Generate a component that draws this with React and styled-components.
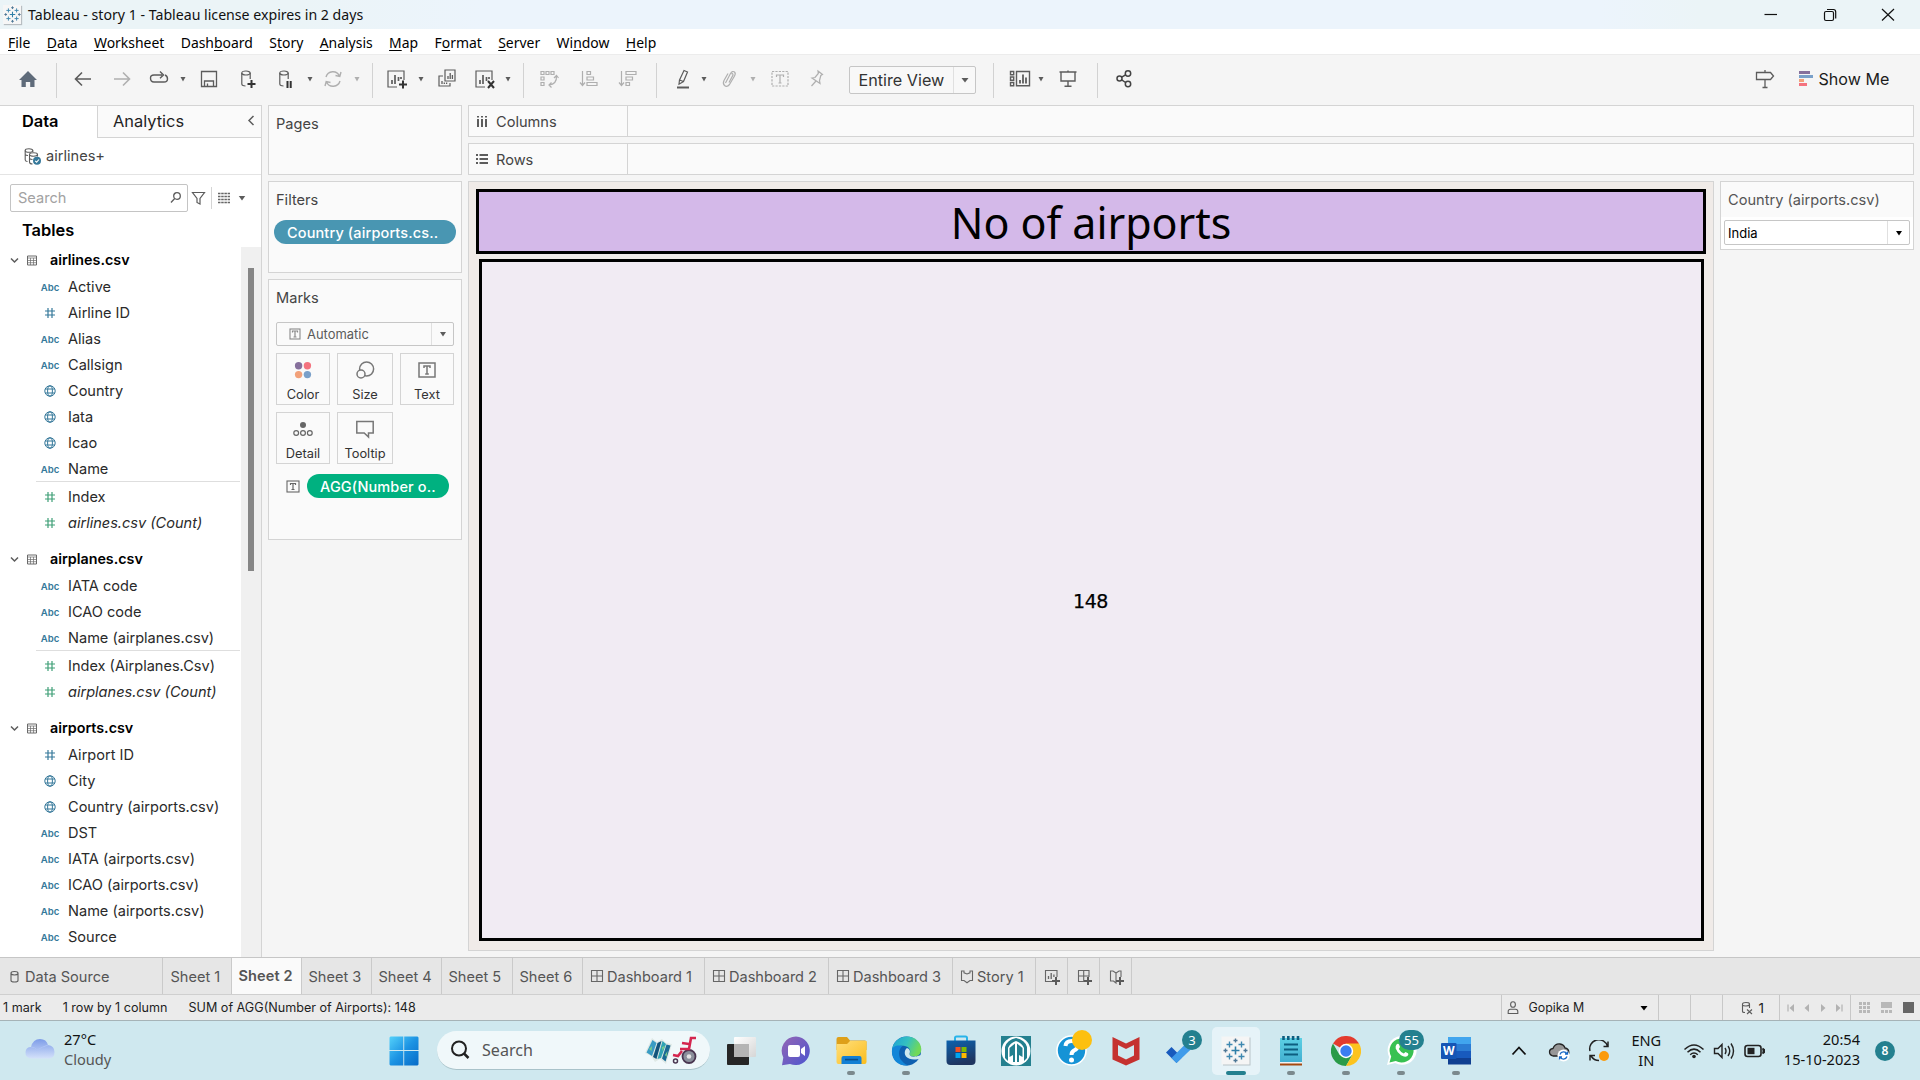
import React from "react";
import styled, { createGlobalStyle, css } from "styled-components";

const LINE = "#d4d4d4";
const UI = `Inter, "Open Sans", sans-serif`;
const WIN = `"Noto Sans", "Open Sans", sans-serif`;

const Global = createGlobalStyle`
  * { box-sizing: border-box; }
  body { margin: 0; background: #f5f5f5; overflow: hidden; }
  svg { display: block; flex: none; }
`;

const Screen = styled.div`
  width: 1920px;
  height: 1080px;
  display: flex;
  flex-direction: column;
  background: #f5f5f5;
  font: 400 14.5px ${UI};
  color: #333;
  white-space: nowrap;
`;

/* ---------- window chrome ---------- */
const TitleBar = styled.header`
  height: 29px;
  display: flex;
  align-items: center;
  padding: 0 22px 0 3px;
  background: linear-gradient(90deg, #ebf4f7 0, #ebf4f7 300px, #ecf4fc 480px, #ecf4fc 1600px, #ebf4f7 1700px);
  font: 400 14.15px ${WIN};
  color: #111;
`;
const AppIcon = styled.div`
  width: 18px;
  height: 19px;
  margin-right: 7px;
  display: flex;
  align-items: center;
  justify-content: center;
  background: #f6f6f6;
  box-shadow: 1px 1px 1px #b8bec2;
`;
const WindowButtons = styled.div`
  margin-left: auto;
  display: flex;
  gap: 38.5px;
`;
const MenuBar = styled.nav`
  height: 25px;
  display: flex;
  align-items: center;
  gap: 16.4px;
  padding: 2px 8px 0;
  background: #fff;
  font: 400 13.95px ${WIN};
  color: #000;
`;
const MenuItem = styled.span`
  u { text-underline-offset: 2px; }
`;
const Toolbar = styled.div`
  height: 51px;
  display: flex;
  align-items: center;
  padding-bottom: 2px;
  border-top: 1px solid #ececec;
`;
const Tool = styled.div`
  flex: none;
  width: ${(p) => p.$w || 24}px;
  height: 24px;
  margin-left: ${(p) => p.$gap || 0}px;
  display: flex;
  align-items: center;
  justify-content: center;
  opacity: ${(p) => (p.$off ? 0.45 : 1)};
`;
const Divider = styled.i`
  flex: none;
  width: 1px;
  height: 35px;
  margin: 3px 0 0 ${(p) => p.$gap}px;
  background: #d2d2d2;
`;
const Combo = styled.div`
  flex: none;
  display: flex;
  align-items: stretch;
  width: ${(p) => p.$w}px;
  height: ${(p) => p.$h}px;
  margin: ${(p) => p.$m || "0"};
  border: 1px solid #c6c6c6;
  border-radius: 2px;
  background: ${(p) => p.$bg || "#fafafa"};
`;
const ComboText = styled.span`
  flex: 1;
  display: flex;
  align-items: center;
  gap: ${(p) => p.$gap || 0}px;
  padding-left: ${(p) => p.$pl}px;
  font-size: ${(p) => p.$size}px;
  color: ${(p) => p.$color || "#333"};
`;
const ComboArrow = styled.span`
  width: 22px;
  display: flex;
  align-items: center;
  justify-content: center;
  border-left: 1px solid #e0e0e0;
`;
const ShowMe = styled.div`
  margin-left: 22px;
  display: flex;
  align-items: center;
  gap: 6px;
  font-size: 16.1px;
  color: #1c1c1c;
`;

/* ---------- workspace ---------- */
const Workspace = styled.main`
  height: 852px;
  display: flex;
`;
const DataPane = styled.aside`
  width: 262px;
  display: flex;
  flex-direction: column;
  background: #fff;
  border-top: 1px solid ${LINE};
  border-right: 1px solid ${LINE};
`;
const PaneTabs = styled.div`
  height: 32px;
  display: flex;
  font-size: 16.4px;
  color: #1f1f1f;
`;
const ActiveTab = styled.div`
  width: 97px;
  padding: 5px 0 0 22px;
  font-weight: 600;
  font-size: 16.4px;
  color: #000;
`;
const IdleTab = styled.div`
  flex: 1;
  display: flex;
  align-items: center;
  justify-content: space-between;
  padding: 0 6px 1px 15px;
  background: #fafafa;
  border-left: 1px solid ${LINE};
  border-bottom: 1px solid ${LINE};
`;
const SourceRow = styled.div`
  height: 37px;
  display: flex;
  align-items: center;
  gap: 5px;
  padding-left: 24px;
  border-bottom: 1px solid #e4e4e4;
  font-size: 14.6px;
  color: #444;
`;
const SearchRow = styled.div`
  display: flex;
  align-items: center;
  margin-top: 9px;
  height: 28px;
  padding-left: 10px;
`;
const SearchBox = styled.div`
  width: 178px;
  height: 28px;
  display: flex;
  align-items: center;
  justify-content: space-between;
  padding: 0 5px 1px 7px;
  border: 1px solid #c4c4c4;
  border-radius: 2px;
  font-size: 14.6px;
  color: #a2a2a2;
`;
const TinyRule = styled.i`
  width: 1px;
  height: 22px;
  margin: 0 5px 0 3px;
  background: ${LINE};
`;
const TablesTitle = styled.h2`
  margin: 0;
  height: 35px;
  padding-left: 22px;
  line-height: 37px;
  font-size: 16.4px;
  font-weight: 600;
  color: #000;
`;
const TreeArea = styled.div`
  flex: 1;
  display: flex;
`;
const Tree = styled.div`
  width: 241px;
`;
const ScrollTrack = styled.div`
  width: 20px;
  padding: 21px 0 0 7px;
  background: #f0f0f0;
`;
const ScrollThumb = styled.div`
  width: 6px;
  height: 303px;
  background: #868686;
`;
const TableHead = styled.div`
  height: 27px;
  display: flex;
  align-items: center;
  margin-top: ${(p) => (p.$first ? 0 : 10)}px;
  padding: 0 0 2px 10px;
  font-size: 14.3px;
  font-weight: 600;
  color: #000;
  span { margin-left: 12px; }
`;
const Field = styled.div`
  height: 26px;
  display: flex;
  align-items: center;
  color: #2a2a2a;
  font-size: 14.55px;
  font-style: ${(p) => (p.$italic ? "italic" : "normal")};
`;
const FieldIcon = styled.span`
  width: 32px;
  margin: 0 2px 0 34px;
  display: flex;
  justify-content: center;
  font-size: 9.6px;
  font-weight: 600;
  font-style: normal;
  color: #35789a;
`;
const FieldRule = styled.div`
  height: 2px;
  margin: -1px 1px 1px 36px;
  border-top: 1px solid #dedede;
`;

const Shelves = styled.section`
  width: 194px;
  margin-left: 6px;
  display: flex;
  flex-direction: column;
  gap: 6px;
`;
const Card = styled.div`
  height: ${(p) => p.$h}px;
  padding: 0 7px;
  border: 1px solid ${LINE};
  background: #fafafa;
`;
const CardTitle = styled.div`
  height: 36px;
  display: flex;
  align-items: center;
  font-size: 14.6px;
  color: #444;
`;
const FilterPills = styled.div`
  margin: 2px -2px 0;
`;
const Pill = styled.div`
  width: ${(p) => p.$w}px;
  height: 24px;
  padding-left: 13px;
  line-height: 25px;
  border-radius: 12px;
  background: ${(p) => p.$bg};
  color: #fff;
  font-size: 14.5px;
  font-weight: 500;
  letter-spacing: 0.13px;
`;
const MarkGrid = styled.div`
  margin-top: 7px;
  display: grid;
  grid-template-columns: 54px 56px 54px;
  gap: 7px;
`;
const MarkButton = styled.div`
  height: 52px;
  display: flex;
  flex-direction: column;
  align-items: center;
  justify-content: space-between;
  padding: 5px 0 1px;
  border: 1px solid ${LINE};
  font-size: 12.8px;
  line-height: 16px;
  color: #333;
`;
const MarkPillRow = styled.div`
  display: flex;
  align-items: center;
  gap: 7px;
  margin: 10px 0 0 10px;
`;

const Canvas = styled.section`
  width: 1446px;
  margin-left: 6px;
  display: flex;
  flex-direction: column;
  gap: 6px;
`;
const Shelf = styled.div`
  height: 32px;
  display: flex;
  border: 1px solid ${LINE};
  background: #fafafa;
`;
const ShelfLabel = styled.div`
  width: 159px;
  display: flex;
  align-items: center;
  gap: 8px;
  padding: 1px 0 0 7px;
  border-right: 1px solid ${LINE};
  font-size: 14.6px;
  color: #444;
`;
const ViewRow = styled.div`
  display: flex;
  gap: 6px;
  align-items: flex-start;
`;
const View = styled.div`
  width: 1246px;
  height: 770px;
  display: flex;
  flex-direction: column;
  gap: 5px;
  padding: 7px 7px 9px;
  border: 1px solid ${LINE};
  background: #f0ebe8;
  color: #000;
`;
const ViewTitle = styled.h1`
  margin: 0;
  height: 65px;
  display: flex;
  align-items: center;
  justify-content: center;
  border: 3px solid #000;
  background: #d4b9e9;
  font: 400 43px/1 ${WIN};
  letter-spacing: -0.05px;
  padding-top: 1px;
`;
const ViewBody = styled.div`
  flex: 1;
  margin: 0 2px 0 3px;
  display: flex;
  align-items: center;
  justify-content: center;
  padding: 1px 2px 0 0;
  border: 3px solid #000;
  background: #f1ebf3;
  font: 400 19px "DejaVu Sans", sans-serif;
  letter-spacing: -0.4px;
  -webkit-text-stroke: 0.25px #000;
`;
const FilterCard = styled.div`
  width: 194px;
  height: 69px;
  padding: 0 3px;
  border: 1px solid ${LINE};
  background: linear-gradient(#fafafa 35px, #fff 35px);
`;
const FilterTitle = styled.div`
  height: 35px;
  padding: 0 4px;
  line-height: 36px;
  font-size: 14.6px;
  color: #555;
`;

/* ---------- sheet tabs and status ---------- */
const SheetTabs = styled.div`
  height: 37px;
  display: flex;
  border-top: 1px solid #c6c6c6;
  background: #e6e6e6;
`;
const SheetTab = styled.div`
  width: ${(p) => p.$w}px;
  display: flex;
  align-items: center;
  gap: ${(p) => p.$gap || 5}px;
  padding: 1px 0 0 ${(p) => p.$pl}px;
  border-right: 1px solid #cacaca;
  font-size: 14.55px;
  color: #555;
  ${(p) => p.$active && css`
    background: #fafafa;
    font-weight: 600;
    letter-spacing: 0.1px;
    padding-bottom: 2px;
  `}
`;
const StatusBar = styled.div`
  height: 27px;
  display: flex;
  border-top: 1px solid #cfcfcf;
  border-bottom: 1px solid #a6b3b7;
  background: #ebebeb;
  font-size: 12.6px;
  color: #1e1e1e;
`;
const StatusText = styled.div`
  flex: 1;
  display: flex;
  align-items: center;
  gap: 21px;
  padding-left: 3px;
`;
const StatusCell = styled.div`
  width: ${(p) => p.$w}px;
  display: flex;
  align-items: center;
  justify-content: ${(p) => p.$justify || "flex-start"};
  padding: 0 ${(p) => p.$pr || 0}px 0 ${(p) => p.$pl || 0}px;
  border-left: 1px solid #c8c8c8;
`;
const StatusLabel = styled.span`
  margin: 0 auto 0 ${(p) => p.$ml}px;
  font-size: ${(p) => p.$size || 12.4}px;
`;

/* ---------- taskbar ---------- */
const Taskbar = styled.footer`
  height: 59px;
  display: flex;
  align-items: center;
  background: #cfe8ef;
  font-family: ${WIN};
  color: #1a1a1a;
`;
const Weather = styled.div`
  flex: none;
  width: 355px;
  display: flex;
  align-items: center;
  gap: 9px;
  padding: 0 0 4px 25px;
`;
const TwoLines = styled.div`
  display: flex;
  flex-direction: column;
  font-size: 14.6px;
  line-height: 20px;
  text-align: ${(p) => p.$align || "left"};
  color: #111;
  margin-bottom: ${(p) => p.$up || 0}px;
  small { font-size: 14.6px; color: ${(p) => p.$second || "#111"}; }
`;
const TaskSearch = styled.div`
  flex: none;
  width: 273px;
  height: 39px;
  margin: 0 7px 0 18px;
  display: flex;
  align-items: center;
  padding: 0 10px 0 13px;
  border-radius: 20px;
  border-bottom: 1px solid #a9c3ca;
  background: #f0f8fa;
  font-size: 16.1px;
  color: #555;
  span { margin: 0 auto 0 12px; }
`;
const TaskApps = styled.div`
  display: flex;
  gap: 7px;
`;
const TaskApp = styled.div`
  position: relative;
  width: 48px;
  height: 48px;
  display: flex;
  align-items: center;
  justify-content: center;
  border-radius: 5px;
  background: ${(p) => (p.$active ? "#e6f3f8" : "transparent")};
`;
const Running = styled.i`
  position: absolute;
  bottom: 0;
  left: 50%;
  width: ${(p) => (p.$active ? 20 : 8)}px;
  height: 4px;
  border-radius: 2px;
  transform: translateX(-50%);
  background: ${(p) => (p.$active ? "#24808f" : "#7b898d")};
`;
const Badge = styled.b`
  position: absolute;
  top: 3px;
  left: ${(p) => p.$x}px;
  min-width: 20px;
  height: 20px;
  padding: 0 5px;
  border-radius: 10px;
  background: ${(p) => p.$bg || "#24808f"};
  color: #fff;
  font: 400 13px/20px ${WIN};
  text-align: center;
`;
const Tray = styled.div`
  margin-left: auto;
  margin-right: 25px;
  display: flex;
  align-items: center;
`;
const TrayItem = styled.div`
  width: ${(p) => p.$w}px;
  display: flex;
  justify-content: center;
`;
const NoticeCount = styled.div`
  width: 20px;
  height: 20px;
  margin-left: 15px;
  border-radius: 50%;
  background: #24808f;
  color: #fff;
  font: 600 12px/20px ${WIN};
  text-align: center;
`;

/* ---------- icons ---------- */
const Ico = ({ s = 24, w, h, c = "#5c5c5c", sw = 1.2, children }) => {
  const W = w || s, H = h || s;
  return (
    <svg width={W} height={H} viewBox={`${-W / 2} ${-H / 2} ${W} ${H}`} fill="none" stroke={c} strokeWidth={sw}>
      {children}
    </svg>
  );
};
const Caret = ({ c = "#5c5c5c", s = 5 }) => (
  <Ico w={10} h={8}><path d={`M${-s / 2 - 0.5} -2H${s / 2 + 0.5}L0 2.4Z`} fill={c} stroke="none" /></Ico>
);
const Cross = ({ x, y, r, c, w = 1 }) => (
  <path d={`M${x - r} ${y}H${x + r}M${x} ${y - r}V${y + r}`} stroke={c} strokeWidth={w} />
);
const TableauMark = ({ k = 1, w = 1.5 }) => (
  <g transform={`scale(${k})`}>
    <Cross x={0} y={0} r={4} c="#2f7fa8" w={w + 0.2} />
    {[[-6, -6], [6, -6], [-6, 6], [6, 6]].map(([x, y]) => <Cross key={`${x},${y}`} x={x} y={y} r={3} c="#3f88b0" w={w} />)}
    {[[0, -10], [0, 10], [-10, 0], [10, 0]].map(([x, y]) => <Cross key={`${x},${y}`} x={x} y={y} r={2} c="#4d7796" w={w} />)}
  </g>
);
const Plus = ({ x, y, r = 4, c = "#333" }) => <Cross x={x} y={y} r={r} c={c} w={2} />;
const Hash = ({ c }) => (
  <Ico s={14} c={c} sw={1.2}><path d="M-2 -5V5M2 -5V5M-5 -2H5M-5 2H5" /></Ico>
);
const Globe = () => (
  <Ico s={14} c="#35789a" sw={1}><circle r="5.2" /><ellipse rx="2.4" ry="5.2" /><path d="M-4.8 -2H4.8M-4.8 2H4.8" /></Ico>
);
const DbShape = () => (
  <><ellipse cx="-2" cy="-6" rx="4.2" ry="2" /><path d="M-6.2 -6V5C-6.2 6.5 -4.5 7 -2.5 7M2.2 -6V0" /></>
);
const TBox = ({ c = "#666", s = 13, w }) => (
  <Ico w={(w || s) + 1} h={s + 1} c={c} sw={1.1}>
    <rect x={-(w || s) / 2 + 0.5} y={-s / 2 + 0.5} width={(w || s) - 1} height={s - 1} />
    <path d="M-2.5 -1.5V-3H2.5V-1.5M0 -3V3M-1.5 3H1.5" strokeWidth="1.2" />
  </Ico>
);
const BarSheet = () => (
  <><path d="M8 1V-8H-8V8H1" /><path d="M-4 5V1M-1 5V-4M2.5 2V-2M5 0V-2" strokeWidth="1.7" /></>
);
const GridIcon = ({ plus }) => (
  <Ico s={16} c="#666" sw={1.1}>
    {plus ? <><path d="M5 0V-6.5H-5.5V4.5H0M-0.3 -6.5V4.5M-5.5 -1H5" /><Plus x={4} y={4} c="#5a5a5a" /></> : <path d="M-5.5 -6.5H5.5V4.5H-5.5ZM0 -6.5V4.5M-5.5 -1H5.5" />}
  </Ico>
);
const BookIcon = ({ plus }) => (
  <Ico s={16} c="#666" sw={1.1}>
    <path d={plus ? "M5 0V-6H3L0 -4V6L-2.5 4H-5.5V-6H-3L0 -4" : "M-5.5 -6V3.5H-3L0 5.7L3 3.5H5.5V-6H3V-4.2L0 -3L-3 -4.2V-6Z"} />
    {plus && <Plus x={4} y={4} c="#5a5a5a" />}
  </Ico>
);
const TableIcon = () => (
  <Ico s={12} c="#6a6a6a" sw={1}><path d="M-4.5 -4H4.5V5H-4.5Z" /><path d="M-4.5 -2H4.5M-4.5 .5H4.5M-4.5 2.7H4.5M-1.5 -2V5M1.5 -2V5" strokeWidth=".7" /></Ico>
);

const TOOLS = [
  { gap: 16, el: <Ico><path d="M0 -8L9 1H6.5V8H2.2V3H-2.2V8H-6.5V1H-9Z" fill="#5f6b7a" stroke="none" /></Ico> },
  { gap: 16, div: 1 },
  { gap: 14, el: <Ico sw={1.6}><path d="M8 0H-7.5M-1 -6.5L-7.5 0L-1 6.5" /></Ico> },
  { gap: 15, off: 1, el: <Ico sw={1.6}><path d="M-8 0H7.5M1 -6.5L7.5 0L1 6.5" /></Ico> },
  { gap: 13, el: <Ico sw={1.4}><path d="M3 -4H-5Q-8.5 -4 -8.5 -1Q-8.5 3 -5 3H5Q8.5 3 8.5 0Q8.5 -3 6 -4M1 -7.5L4.5 -4L1 -0.8" /></Ico> },
  { gap: 8, caret: 1 },
  { gap: 10, el: <Ico sw={1.3}><path d="M-7.5 -7.5H7.5V7.5H-7.5ZM-4.5 7.5V2H4.5V7.5M-1.5 7.5V4.5" /></Ico> },
  { gap: 15, el: <Ico><DbShape /><Plus x={3.5} y={5} /></Ico> },
  { gap: 14, el: <Ico><DbShape /><path d="M1.5 2V9M4.7 2V9" stroke="#333" strokeWidth="2" /></Ico> },
  { gap: 8, caret: 1 },
  { gap: 7, off: 1, el: <Ico sw={1.4}><path d="M-7 -2A7.2 7.2 0 0 1 6.5 -3M7 2A7.2 7.2 0 0 1 -6.5 3M8 -7L6.8 -2.5L2.5 -3.5M-8 7L-6.8 2.5L-2.5 3.5" /></Ico> },
  { gap: 8, caret: 1, off: 1 },
  { gap: 11, div: 1 },
  { gap: 12, el: <Ico><g transform="translate(-1 0)"><BarSheet /></g><Plus x={6} y={5.5} /></Ico> },
  { gap: 8, caret: 1 },
  { gap: 10, el: <Ico><path d="M-2 -9H8V2H-2ZM-4 -3H-8V7H3V4" /><path d="M1 0V-3M3.2 0V-6M5.4 0V-4M-5 5V2M-2.7 5V3.5M-0.4 5V3.5" strokeWidth="1.3" /></Ico> },
  { gap: 14, el: <Ico><g transform="translate(-1 0)"><BarSheet /></g><path d="M3 2L9 9M9 2L3 9" stroke="#333" strokeWidth="2" /></Ico> },
  { gap: 7, caret: 1 },
  { gap: 11, div: 1 },
  { gap: 13, off: 1, el: <Ico><path d="M-8 -7.5H-5V-4.5H-8ZM-3 -7.5H0V-4.5H-3ZM2 -7.5H5V-4.5H2ZM-8 -2H-5V1H-8ZM-8 3.5H-5V6.5H-8ZM7.5 -3Q8 5 0 6M5 -1L7.5 -3.5L9.5 -1M2.5 3.5L0 6L2.5 8.5" /></Ico> },
  { gap: 16, off: 1, el: <Ico><path d="M-6.5 -8V6M-9 3.5L-6.5 6.5L-4 3.5M-2 -7.5H1.5V-4.5H-2ZM-2 -2H4.5V1H-2ZM-2 3.5H8V6.5H-2Z" /></Ico> },
  { gap: 15, off: 1, el: <Ico><path d="M-6.5 -8V6M-9 3.5L-6.5 6.5L-4 3.5M-2 -7.5H8V-4.5H-2ZM-2 -2H4.5V1H-2ZM-2 3.5H1.5V6.5H-2Z" /></Ico> },
  { gap: 16, div: 1 },
  { gap: 14, el: <Ico><path d="M-3.5 1L1 -8.5L4.5 -7L0.5 2.5L-4 5.2ZM-3.5 1L0.5 2.5" /><path d="M-6 8.5H6" strokeWidth="2" /></Ico> },
  { gap: 5, caret: 1 },
  { gap: 9, off: 1, el: <Ico><path d="M-3.5 4L1.5 -5.5Q3.5 -8.5 5.5 -7Q7 -5.5 5.5 -3L0.5 5.5Q-2 8.5 -4.5 6.5Q-6.5 4.5 -5 1.5L-1 -5.5M0 3.5L4 -4Q4 -6 2.5 -5" /></Ico> },
  { gap: 8, caret: 1, off: 1 },
  { gap: 11, off: 1, el: <Ico><rect x="-8" y="-7.5" width="16" height="14.5" strokeDasharray="2.2 1.2" /><path d="M-3.5 -2V-4H3.5V-2M0 -4V4M-1.5 4H1.5" /></Ico> },
  { gap: 13, off: 1, el: <Ico><path d="M1 -8L5.5 -4.5L3.8 -3.5L2.5 1.5L3 4.5L-5 -1L-2 -1.5L1.3 -5.5ZM-1 2L-5.5 7" /></Ico> },
  { gap: 20, combo: 1 },
  { gap: 17, div: 1 },
  { gap: 14, el: <Ico><path d="M-9.5 -7.5H-6.3V-4.3H-9.5ZM-9.5 -2H-6.3V1.2H-9.5ZM-9.5 3.5H-6.3V6.7H-9.5ZM-3.5 -7.5H9.5V6.7H-3.5Z" strokeWidth="1.4" /><path d="M0 4.5V1M3 4.5V-4.5M6 4.5V-1.5" strokeWidth="1.8" /></Ico> },
  { gap: 5, caret: 1 },
  { gap: 11, el: <Ico sw={1.4}><path d="M-8.5 -7H8.5M-7 -7V2H7V-7M0 2V7M-3.5 7.2H3.5M0 -7V-8.5" /></Ico> },
  { gap: 17, div: 1 },
  { gap: 14, el: <Ico c="#444" sw={1.5}><circle cx="-4.5" cy="-0.5" r="2.5" /><circle cx="4" cy="-5.5" r="2.7" /><circle cx="4" cy="5" r="2.7" /><path d="M-2.3 -1.8L1.6 -4.2M-2.3 0.9L1.6 3.5" /></Ico> },
];

const MENUS = ["_File", "_Data", "_Worksheet", "Dash_board", "S_tory", "_Analysis", "_Map", "F_ormat", "_Server", "Wi_ndow", "_Help"];
const Menu = ({ label }) => {
  const i = label.indexOf("_");
  return <MenuItem>{label.slice(0, i)}<u>{label[i + 1]}</u>{label.slice(i + 2)}</MenuItem>;
};

const TREE = [
  { name: "airlines.csv", dims: [["a", "Active"], ["#", "Airline ID"], ["a", "Alias"], ["a", "Callsign"], ["g", "Country"], ["g", "Iata"], ["g", "Icao"], ["a", "Name"]], measures: ["Index", "airlines.csv (Count)"] },
  { name: "airplanes.csv", dims: [["a", "IATA code"], ["a", "ICAO code"], ["a", "Name (airplanes.csv)"]], measures: ["Index (Airplanes.Csv)", "airplanes.csv (Count)"] },
  { name: "airports.csv", dims: [["#", "Airport ID"], ["g", "City"], ["g", "Country (airports.csv)"], ["a", "DST"], ["a", "IATA (airports.csv)"], ["a", "ICAO (airports.csv)"], ["a", "Name (airports.csv)"], ["a", "Source"]], measures: [] },
];

const TABS = [
  { w: 69, t: "Sheet 1", pl: 7.5 }, { w: 70, t: "Sheet 2", active: 1 }, { w: 70, t: "Sheet 3" }, { w: 70, t: "Sheet 4" },
  { w: 71, t: "Sheet 5" }, { w: 70, t: "Sheet 6" }, { w: 122, t: "Dashboard 1", i: <GridIcon /> },
  { w: 124, t: "Dashboard 2", i: <GridIcon /> }, { w: 124, t: "Dashboard 3", i: <GridIcon /> }, { w: 83, t: "Story 1", i: <BookIcon /> },
];

const MARKS = [
  ["Color", <Ico key="c" w={22} h={22} c="none"><circle cx="-4.4" cy="-4.2" r="3.7" fill="#86709c" /><circle cx="4.4" cy="-4.2" r="3.7" fill="#f4737f" /><circle cx="-4.4" cy="4.6" r="3.7" fill="#f2a17a" /><circle cx="4.4" cy="4.6" r="3.7" fill="#7aa0c9" /></Ico>],
  ["Size", <Ico key="s" w={22} h={22} c="#777" sw={1.5}><circle cx="1.6" cy="-1" r="7" /><circle cx="-4" cy="4" r="4" fill="#fafafa" /></Ico>],
  ["Text", <Ico key="t" w={22} h={22} c="#777" sw={1.5}><rect x="-8" y="-7" width="16" height="14" /><path d="M-3 -2V-4H3V-2M0 -4V4M-1.8 4H1.8" /></Ico>],
  ["Detail", <Ico key="d" w={22} h={22} c="#666" sw={1.2}><circle cy="-4" r="3" fill="#666" stroke="none" /><circle cx="-6.8" cy="4" r="2.4" /><circle cy="4" r="2.4" /><circle cx="6.8" cy="4" r="2.4" /></Ico>],
  ["Tooltip", <Ico key="p" w={22} h={22} c="#777" sw={1.5}><path d="M-8.2 -7.5H8.2V4H3.5V8L-0.8 4H-8.2Z" /></Ico>],
];

const Windows = () => (
  <svg width="30" height="30" viewBox="0 0 30 30">
    <defs><linearGradient id="win" gradientUnits="userSpaceOnUse" x1="0" y1="0" x2="30" y2="30"><stop offset="0" stopColor="#56d3fb" /><stop offset=".5" stopColor="#1c93e3" /><stop offset="1" stopColor="#0669c6" /></linearGradient></defs>
    <path fill="url(#win)" d="M1.5 .5H14.3V14H.5V1.5ZM15.2 .5H28.5L29.5 1.5V14H15.2ZM.5 15H14.3V29.5H1.5L.5 28.5ZM15.2 15H29.5V28.5L28.5 29.5H15.2Z" />
  </svg>
);
const SearchArt = () => (
  <svg width="56" height="30" viewBox="0 0 56 30">
    <path d="M8 3L13 7L18 4L22 8L28 9L22 29L16 24L11 27L7 21L1 18Z" fill="#dfe9e6" />
    <path d="M8.500 5L12.500 8L8 21L2.500 17.500Z" fill="#3a9cc4" /><path d="M13.500 8L17.500 6L12.500 24L9 22Z" fill="#14557c" />
    <path d="M18.500 6L22 9L17 23L13.500 24Z" fill="#2fa3b5" /><path d="M22.500 9.500L26.500 10.500L21.500 26.500L18 23.500Z" fill="#1a6a94" />
    <path d="M5 14L8 11L7.500 16ZM18 12L21 11L18.500 16ZM21 20L23.500 16L22.500 22Z" fill="#7ccb8b" />
    <circle cx="45" cy="21.500" r="6.500" fill="#8b8f9b" stroke="#4a3650" strokeWidth="1.800" /><circle cx="45" cy="21.500" r="2.300" fill="#e4e4e4" />
    <circle cx="31.500" cy="26" r="2" fill="none" stroke="#4a3650" strokeWidth="1.500" />
    <path d="M52 3H47L45 14H36M45 9L38 8M38 16L34 21L29 20" fill="none" stroke="#d4264f" strokeWidth="2.600" />
  </svg>
);
const AppArt = {
  taskview: <svg width="30" height="30" viewBox="0 0 30 30"><defs><linearGradient id="tv" x1="0" y1="0" x2="1" y2="1"><stop offset="0" stopColor="#fff" /><stop offset="1" stopColor="#d6d6d6" /></linearGradient></defs><rect x="1" y="8" width="22" height="21" rx="1" fill="#262626" /><rect x="8" y="1" width="22" height="20" rx="1" fill="url(#tv)" /><path d="M8 8H23V21H8Z" fill="#b4b4b4" /></svg>,
  chat: <svg width="30" height="30" viewBox="0 0 30 30"><defs><linearGradient id="ch" x1="0" y1="0" x2="1" y2="1"><stop offset="0" stopColor="#9566b4" /><stop offset="1" stopColor="#4c55cf" /></linearGradient></defs><path d="M15 .5A14.3 14.3 0 1 1 9 28L1 29.3L2.3 21.5A14.3 14.3 0 0 1 15 .5Z" fill="url(#ch)" /><rect x="7" y="9" width="12" height="12" rx="2" fill="#fff" /><path d="M20 13L24 10V20L20 17Z" fill="#fff" /></svg>,
  explorer: <svg width="31" height="30" viewBox="0 0 31 30"><defs><linearGradient id="fo" x1="0" y1="0" x2="1" y2="1"><stop offset="0" stopColor="#ffdf7c" /><stop offset="1" stopColor="#fbbd1d" /></linearGradient></defs><path d="M.5 3Q.5 1 2.5 1H11L14 4.5H29Q30.5 4.5 30.5 6V14H.5Z" fill="#dea01a" /><path d="M.5 8H11L14 5H30.5V26Q30.5 28 28.5 28H2.5Q.5 28 .5 26Z" fill="url(#fo)" /><path d="M5.5 28V22Q5.5 20 7.5 20H23.5Q25.5 20 25.5 22V28Z" fill="#127fd4" /><path d="M9 23.6H22" stroke="#0a4e8a" strokeWidth="1.6" /></svg>,
  edge: <svg width="31" height="30" viewBox="0 0 31 30"><defs><linearGradient id="e1" x1="0" y1="0" x2="1" y2=".35"><stop offset="0" stopColor="#1ba0d8" /><stop offset=".55" stopColor="#35c1c0" /><stop offset="1" stopColor="#71d957" /></linearGradient></defs><circle cx="15.5" cy="15" r="14.5" fill="#0f60b0" /><path d="M1 14C2 6 8 .5 16 .5C24 .5 30 6 30.3 13C30.3 19 26 21 22 20.5C18.5 20 18 18.5 19 17C20 14 18 11 14 10C8 9 3 12 1 16Z" fill="url(#e1)" /><path d="M1 14C1 11 6 8.5 11.5 10C7 13 7 21 11 25C13 28 17 29.5 18 29.2C8 31 0 24 1 14Z" fill="#1386d8" /><path d="M16 12C19 13 19.500 15.500 18.500 17.500C18 20 21.500 22 28.500 19.500L31 19L30 22C25 24.500 18 24 15 20.500C13 17.500 13.500 14 16 12Z" fill="#cfe8ef" /></svg>,
  store: <svg width="30" height="31" viewBox="0 0 30 31"><defs><linearGradient id="st" x1="0" y1="0" x2=".3" y2="1"><stop offset="0" stopColor="#0c62ae" /><stop offset="1" stopColor="#1f3560" /></linearGradient></defs><path d="M9 7V3Q9 1.500 10.500 1.500H19.500Q21 1.500 21 3V7" fill="none" stroke="#28b4ea" strokeWidth="2" /><path d="M.5 5.500H29.500V26Q29.500 30 25.500 30H4.500Q.5 30 .5 26Z" fill="url(#st)" /><path d="M9.500 12H14.500V17H9.500Z" fill="#f25022" /><path d="M15.500 12H20.500V17H15.500Z" fill="#7fba00" /><path d="M9.500 18H14.500V23H9.500Z" fill="#00a4ef" /><path d="M15.500 18H20.500V23H15.500Z" fill="#ffb900" /></svg>,
  library: <svg width="30" height="30" viewBox="0 0 30 30"><path d="M0 0H30V30H0Z" fill="#24808f" /><circle cx="15" cy="15" r="14.500" fill="#fff" /><path d="M4 22V11Q6 4 15 2Q24 4 26 11V22L23 25V12Q21 7 15 5Q9 7 7 12V25Z" fill="#24808f" /><path d="M8.500 21V12L14 7.500V26H12V19ZM21.500 21V12L16 7.500V26H18V19Z" fill="#24808f" /></svg>,
  help: <svg width="31" height="31" viewBox="0 0 31 31"><circle cx="15.500" cy="15.500" r="14.500" fill="#1593d6" stroke="#fff" strokeWidth="1.600" /><path d="M9.500 11Q10 6 15.500 6Q21.500 6 21.500 11Q21.500 14 18 15.500Q15.500 17 15.500 20" fill="none" stroke="#fff" strokeWidth="4" /><circle cx="15.500" cy="25" r="2.500" fill="#fff" /></svg>,
  mcafee: <svg width="28" height="30" viewBox="0 0 28 30"><path d="M.5 1L14 7.500L27.500 1V23.500L14 29.500L.5 23.500ZM6 9V19.500L14 23.500L22 19.500V9L14 13Z" fill="#c5312f" fillRule="evenodd" /></svg>,
  todo: <svg width="32" height="30" viewBox="0 0 32 30"><path d="M1 16.500L6.500 11L17 21.500L11.500 27Z" fill="#185abd" /><path d="M11.500 27L6.500 22L24 4.500L29.500 10Z" fill="#3f9bea" /></svg>,
  tableau: <svg width="30" height="30" viewBox="-15 -15 30 30"><path d="M-13 -13.500H14.500V14.500H-13Z" fill="#b9c3c8" /><path d="M-14.500 -14.500H13.500V13.500H-14.500Z" fill="#f5f5f5" /><g transform="translate(-.5 -.5)"><TableauMark w={1.400} /></g></svg>,
  notes: <svg width="24" height="32" viewBox="0 0 24 32"><defs><linearGradient id="nt" x1="0" y1="0" x2="0" y2="1"><stop offset="0" stopColor="#5cd0e4" /><stop offset="1" stopColor="#42aed0" /></linearGradient></defs><path d="M1 26H23V30.500H1Z" fill="#a5480f" /><path d="M1 3H23V27.500H1Z" fill="url(#nt)" /><path d="M1 27H23V28.500H1Z" fill="#f2f2f2" /><path d="M5 9.500H19M5 14.500H19M5 19.500H19" stroke="#0d5e80" strokeWidth="1.800" /><path d="M4.500 1V5M9.300 1V5M14.100 1V5M19 1V5" stroke="#0d5e80" strokeWidth="2.600" /></svg>,
  chrome: <svg width="30" height="30" viewBox="-15 -15 30 30"><path d="M0 0L-13 -7.500A15 15 0 0 1 13 -7.500Z" fill="#e33b2e" /><path d="M-13 -7.500A15 15 0 0 0 0 15L6.500 3.750L-6.500 3.750Z" fill="#2a9b48" /><path d="M13 -7.500H0L6.500 3.750L0 15A15 15 0 0 0 13 -7.500Z" fill="#fcc31e" /><circle r="7.200" fill="#fff" /><circle r="5.700" fill="#3a7df0" /></svg>,
  whatsapp: <svg width="31" height="31" viewBox="0 0 31 31"><path d="M1 30L3.200 22A14.500 14.500 0 1 1 9 28Z" fill="#fff" /><path d="M3.500 27.500L5.200 21.500A12 12 0 1 1 9.800 26Z" fill="#38c152" /><path d="M10.500 9.500Q12 8 13 9.500L14 12L12.800 14Q14.500 17 17.800 18.600L19.500 17L22 18.300Q23 19.500 21.500 21Q19 22.800 15 20.300Q11 17.500 9.700 13.500Q9.300 11 10.500 9.500Z" fill="#fff" /></svg>,
  word: <svg width="30" height="30" viewBox="0 0 30 30"><path d="M7 1H30V8H7Z" fill="#41a5ee" /><path d="M7 8H30V15H7Z" fill="#2b7cd3" /><path d="M7 15H30V22H7Z" fill="#185abd" /><path d="M7 22H30V28.500H7Z" fill="#103f91" /><rect x="0" y="7" width="15.500" height="16" rx="1" fill="#1555b5" /><text x="7.700" y="19.300" textAnchor="middle" fill="#fff" fontFamily="Open Sans, sans-serif" fontWeight="700" fontSize="12">W</text></svg>,
};
const APPS = [
  ["taskview"], ["chat"], ["explorer", { run: 1 }], ["edge", { run: 1 }], ["store"], ["library"], ["help", { dot: 1 }],
  ["mcafee"], ["todo", { n: "3", x: 25 }], ["tableau", { run: 1, active: 1 }], ["notes", { run: 1 }], ["chrome", { run: 1 }],
  ["whatsapp", { run: 1, n: "55", x: 22 }], ["word", { run: 1 }],
];

export default function App() {
  return (
    <Screen>
      <Global />
      <TitleBar>
        <AppIcon><Ico s={17}><TableauMark k={0.68} w={1.4} /></Ico></AppIcon>
        Tableau - story 1 - Tableau license expires in 2 days
        <WindowButtons>
          <Ico s={20} c="#111"><path d="M-6.500 -.5H6" /></Ico>
          <Ico s={20} c="#111"><rect x="-5.500" y="-3.500" width="9" height="9" rx="1.500" /><path d="M-3 -5.500H3.500Q5.700 -5.500 5.700 -3V3.500" /></Ico>
          <Ico s={20} c="#111"><path d="M-6 -6L6 5.500M6 -6L-6 5.500" /></Ico>
        </WindowButtons>
      </TitleBar>
      <MenuBar>{MENUS.map((m) => <Menu key={m} label={m} />)}</MenuBar>
      <Toolbar>
        {TOOLS.map((t, i) => {
          if (t.div) return <Divider key={i} $gap={t.gap} />;
          if (t.caret) return <Tool key={i} $gap={t.gap} $w={8} $off={t.off}><Caret s={4} /></Tool>;
          if (t.combo) return (
            <Combo key={i} $w={127} $h={28} $m={`2px 0 0 ${t.gap}px`} $bg="#f8f8f8">
              <ComboText $pl={8.5} $size={16.2}>Entire View</ComboText><ComboArrow><Caret s={6} /></ComboArrow>
            </Combo>
          );
          return <Tool key={i} $gap={t.gap} $off={t.off}>{t.el}</Tool>;
        })}
        <Tool $gap={616.5}><Ico sw={1.300}><path d="M-8.500 -6.500H5.500L8.500 -3L5.500 .5H-8.500ZM0 -9V-6.500M0 .5V8.500M-2.500 8.500H2.500" /></Ico></Tool>
        <ShowMe>
          <Ico w={14} h={16} c="none"><path d="M-7 -8H4V-5H-7Z" fill="#86709c" /><path d="M-7 -4H7V-1H-7Z" fill="#7aa0c9" /><path d="M-7 0H-2V3H-7Z" fill="#f2a17a" /><path d="M-7 4H1V7H-7Z" fill="#f4737f" /></Ico>
          Show Me
        </ShowMe>
      </Toolbar>

      <Workspace>
        <DataPane>
          <PaneTabs>
            <ActiveTab>Data</ActiveTab>
            <IdleTab>Analytics<Ico w={8} h={14} sw={1.500}><path d="M2.500 -5L-2 -.5L2.500 4" /></Ico></IdleTab>
          </PaneTabs>
          <SourceRow>
            <Ico s={17} sw={1.100}>
              <ellipse cx="-3.500" cy="-6" rx="3.800" ry="1.800" /><path d="M-7.300 -6V3.500Q-7 5 -5 5M.300 -6V-4.500M-7.300 -2Q-6.500 -1 -4.500 -1" />
              <ellipse cx="1" cy="-2" rx="4" ry="1.700" /><path d="M-3 -2V5.500Q-3 7.500 0 7.500M5 -2V0M-3 2Q-2 3 0 3" />
              <circle cx="4.500" cy="4.200" r="4" fill="#35789a" stroke="none" /><path d="M2.700 4.300L4.100 5.700L6.500 3" stroke="#fff" />
            </Ico>
            airlines+
          </SourceRow>
          <SearchRow>
            <SearchBox>Search<Ico s={13} sw={1.300}><circle cx="1.500" cy="-1.500" r="3.300" /><path d="M-.8 1L-4.500 5" /></Ico></SearchBox>
            <Ico w={20} h={16}><path d="M-5.500 -5.500H6.500L2 .5V6L-1 4.500V.5Z" /></Ico>
            <TinyRule />
            <Ico w={14} h={12} c="#666" sw={1.500}><path d="M-6 -4.500H6M-6 -1.500H6M-6 1.500H6M-6 4.500H6" strokeDasharray="2.500 .7" /></Ico>
            <Tool $gap={6} $w={10}><Caret s={5.500} /></Tool>
          </SearchRow>
          <TablesTitle>Tables</TablesTitle>
          <TreeArea>
            <Tree>
              {TREE.map((t, i) => (
                <React.Fragment key={t.name}>
                  <TableHead $first={i === 0}>
                    <Ico w={9} h={8} sw={1.500}><path d="M-3.500 -1.500L0 2L3.500 -1.500" /></Ico>
                    <Tool $gap={7} $w={12}><TableIcon /></Tool>
                    <span>{t.name}</span>
                  </TableHead>
                  {t.dims.map(([k, n]) => (
                    <Field key={n}><FieldIcon>{k === "a" ? "Abc" : k === "g" ? <Globe /> : <Hash c="#35789a" />}</FieldIcon>{n}</Field>
                  ))}
                  {t.measures.length > 0 && <FieldRule />}
                  {t.measures.map((n, j) => <Field key={n} $italic={j === 1}><FieldIcon><Hash c="#3f9f77" /></FieldIcon>{n}</Field>)}
                </React.Fragment>
              ))}
            </Tree>
            <ScrollTrack><ScrollThumb /></ScrollTrack>
          </TreeArea>
        </DataPane>

        <Shelves>
          <Card $h={70}><CardTitle>Pages</CardTitle></Card>
          <Card $h={92}>
            <CardTitle>Filters</CardTitle>
            <FilterPills><Pill $w={182} $bg="#4996b2">Country (airports.cs..</Pill></FilterPills>
          </Card>
          <Card $h={261}>
            <CardTitle>Marks</CardTitle>
            <Combo $w={178} $h={24} $m="6px 0 0">
              <ComboText $pl={12} $gap={6} $size={12.95} $color="#5a5a5a"><TBox c="#8a8a8a" s={11} />Automatic</ComboText><ComboArrow><Caret s={5} /></ComboArrow>
            </Combo>
            <MarkGrid>{MARKS.map(([n, ic]) => <MarkButton key={n}>{ic}{n}</MarkButton>)}</MarkGrid>
            <MarkPillRow><TBox s={12} w={13} /><Pill $w={142} $bg="#00b180">AGG(Number o..</Pill></MarkPillRow>
          </Card>
        </Shelves>

        <Canvas>
          <Shelf><ShelfLabel><Ico s={12} sw={2}><path d="M-4 -3V5M0 -3V5M4 -3V5M-4 -6V-4.500M0 -6V-4.500M4 -6V-4.500" /></Ico>Columns</ShelfLabel></Shelf>
          <Shelf><ShelfLabel><Ico s={12} sw={1.800}><path d="M-6 -5H-4M-2.500 -5H6M-6 -1H-4M-2.500 -1H6M-6 3H-4M-2.500 3H6" /></Ico>Rows</ShelfLabel></Shelf>
          <ViewRow>
            <View>
              <ViewTitle>No of airports</ViewTitle>
              <ViewBody>148</ViewBody>
            </View>
            <FilterCard>
              <FilterTitle>Country (airports.csv)</FilterTitle>
              <Combo $w={186} $h={25} $m="3px 0 0" $bg="#fff">
                <ComboText $pl={3} $size={13} $color="#000">India</ComboText><ComboArrow><Caret s={5} c="#000" /></ComboArrow>
              </Combo>
            </FilterCard>
          </ViewRow>
        </Canvas>
      </Workspace>

      <SheetTabs>
        <SheetTab $w={163} $pl={9}>
          <Ico w={11} h={14} sw={1.100}><path d="M-3.500 -4Q-3.500 -5.500 0 -5.500Q3.500 -5.500 3.500 -4V3.500Q3.500 5 0 5Q-3.500 5 -3.500 3.500ZM-3.500 -3.500Q-3 -2 0 -2Q3 -2 3.500 -3.500" /></Ico>
          Data Source
        </SheetTab>
        {TABS.map((t) => <SheetTab key={t.t} $w={t.w} $active={t.active} $gap={2.500} $pl={t.pl || (t.i ? 5.500 : 6.500)}>{t.i}{t.t}</SheetTab>)}
        <SheetTab $w={32} $pl={8}><Ico s={16} c="#666" sw={1.100}><path d="M5 0V-6.500H-6.500V4.500H0" /><path d="M-3.500 2V-1M-.8 2V-4M1.900 0V-2.500" strokeWidth="1.300" /><Plus x={4} y={4} c="#5a5a5a" /></Ico></SheetTab>
        <SheetTab $w={32} $pl={8}><GridIcon plus /></SheetTab>
        <SheetTab $w={32} $pl={8}><BookIcon plus /></SheetTab>
      </SheetTabs>
      <StatusBar>
        <StatusText><span>1 mark</span><span>1 row by 1 column</span><span>SUM of AGG(Number of Airports): 148</span></StatusText>
        <StatusCell $w={157} $pl={5} $pr={9}>
          <Ico w={12} h={14} sw={1.100}><ellipse cy="-3.500" rx="2.400" ry="2.800" /><path d="M-4.800 5.500V3.500Q-4.800 1.300 -2.500 1.300H2.500Q4.800 1.300 4.800 3.500V5.500Z" /></Ico>
          <StatusLabel $ml={9.500}>Gopika M</StatusLabel><Caret s={6} c="#000" />
        </StatusCell>
        <StatusCell $w={32} /><StatusCell $w={32} />
        <StatusCell $w={57} $pl={17}>
          <Ico s={14} sw={1.100}><path d="M-4.500 -4Q-4.500 -5.500 -1 -5.500Q2.500 -5.500 2.500 -4V0M-4.500 -4V3.500Q-4.500 4.500 -2 4.500M-4.500 -3Q-4 -2 -1 -2Q2 -2 2.500 -3.500M0 1.500L5 6M5 1.500L0 6" /></Ico>
          <StatusLabel $ml={4.500} $size={13.500}>1</StatusLabel>
        </StatusCell>
        <StatusCell $w={71} $justify="space-evenly">
          <Ico w={10} h={10}><path d="M3 -4V4L-1.500 0Z" fill="#b2b2b2" stroke="none" /><path d="M-3 -3.500V3.500" stroke="#b2b2b2" /></Ico>
          <Ico w={10} h={10}><path d="M2 -4V4L-2.500 0Z" fill="#b2b2b2" stroke="none" /></Ico>
          <Ico w={10} h={10}><path d="M-2 -4V4L2.500 0Z" fill="#b2b2b2" stroke="none" /></Ico>
          <Ico w={10} h={10}><path d="M-3 -4V4L1.500 0Z" fill="#b2b2b2" stroke="none" /><path d="M3 -3.500V3.500" stroke="#b2b2b2" /></Ico>
        </StatusCell>
        <StatusCell $w={70} $pl={8} $pr={6} $justify="space-between">
          <Ico w={11} h={11} c="none"><path d="M-5.500 -5.500h3v3h-3zM-1.500 -5.500h3v3h-3zM2.500 -5.500h3v3h-3zM-5.500 -1.500h3v3h-3zM-1.500 -1.500h3v3h-3zM2.500 -1.500h3v3h-3zM-5.500 2.500h3v3h-3zM-1.500 2.500h3v3h-3zM2.500 2.500h3v3h-3z" fill="#b8b8b8" /></Ico>
          <Ico w={11} h={11} c="none"><path d="M-5.500 -5.500h11v6h-11zM-5.500 2.500h3v3h-3zM-1.500 2.500h3v3h-3zM2.500 2.500h3v3h-3z" fill="#b8b8b8" /></Ico>
          <Ico w={11} h={11} c="none"><path d="M-5.500 -5.500h11v11h-11z" fill="#666" /></Ico>
        </StatusCell>
      </StatusBar>

      <Taskbar>
        <Weather>
          <svg width="30" height="22" viewBox="0 0 30 22">
            <defs><linearGradient id="cl" x1="0" y1="0" x2="0" y2="1"><stop offset="0" stopColor="#7d9ce8" /><stop offset="1" stopColor="#d3e1fa" /></linearGradient></defs>
            <path d="M7 20.500Q0 20 .5 14Q1 9 6 9Q8 1 15 1Q21.500 1 23 7Q29.500 8 29.500 14Q29.500 20 24 20.500Z" fill="url(#cl)" /><path d="M6 9Q10 9 12 12Q17 9 23 7" fill="none" stroke="#adc3f4" />
          </svg>
          <TwoLines $second="#555"><span>27°C</span><small>Cloudy</small></TwoLines>
        </Weather>
        <Tool $gap={34} $w={30}><Windows /></Tool>
        <TaskSearch>
          <Ico s={20} c="#222" sw={2}><circle cx="-1" cy="-1.500" r="7" /><path d="M4 3.500L8.500 8" strokeWidth="2.500" /></Ico>
          <span>Search</span><SearchArt />
        </TaskSearch>
        <TaskApps>
          {APPS.map(([k, o = {}]) => (
            <TaskApp key={k} $active={o.active}>
              {AppArt[k]}
              {o.n && <Badge $x={o.x}>{o.n}</Badge>}
              {o.dot && <Badge $x={25} $bg="#fdc010" />}
              {o.run && <Running $active={o.active} />}
            </TaskApp>
          ))}
        </TaskApps>
        <Tray>
          <TrayItem $w={40}><Ico s={20} c="#111" sw={1.800}><path d="M-6.500 3.500L0 -3.500L6.500 3.500" /></Ico></TrayItem>
          <TrayItem $w={40}>
            <Ico s={22} sw={1.300} c="#222"><path d="M-6 5Q-9.500 4 -9.500 1Q-9.500 -2 -6 -2.500Q-4 -7.500 1 -7Q5 -6.500 6 -3Q9.500 -2.500 9.800 1Q10 4 7 5Z" fill="#979797" /><circle cx="4.500" cy="4.500" r="6" fill="#fff" stroke="none" /><path d="M1 3.500A3.800 3.800 0 0 1 8 3M8 5.500A3.800 3.800 0 0 1 1 6M8.500 .5V3H6M.500 8.500V6H3" stroke="#1668c5" /></Ico>
          </TrayItem>
          <TrayItem $w={40}><Ico s={22} c="#222" sw={1.500}><path d="M-9 0A9 9 0 0 1 8.500 -4.500M9 -9.500V-4.500H4.500M-9 9.500V4.500H-4M-8 5Q-5 9.500 0 9.500" /><circle cx="5" cy="5" r="5" fill="#fb9a0b" stroke="none" /></Ico></TrayItem>
          <TrayItem $w={55}><TwoLines $align="center" $up={2}><span>ENG</span><small>IN</small></TwoLines></TrayItem>
          <TrayItem $w={40}><Ico s={22} c="#222" sw={1.500}><path d="M-9.500 -1.500Q0 -10.500 9.500 -1.500M-6.500 1.200Q0 -5 6.500 1.200M-3.800 3.700Q0 .3 3.800 3.700" /><circle cy="5.500" r="1.800" fill="#222" stroke="none" /></Ico></TrayItem>
          <TrayItem $w={20}><Ico s={22} c="#222" sw={1.400}><path d="M-9.500 -2.500H-6L-2 -6.500V6.500L-6 2.500H-9.500ZM1 -3Q3 0 1 3M4 -5Q7.500 0 4 5M7 -7.500Q12 0 7 7.500" /></Ico></TrayItem>
          <TrayItem $w={40}><Ico s={22} c="#222" sw={1.600}><rect x="-9" y="-5.500" width="16" height="11" rx="2.500" /><rect x="-6.500" y="-3.200" width="7" height="6.400" fill="#222" stroke="none" /><path d="M8.500 -2.500L10.500 -1V1L8.500 2.500" fill="#222" /></Ico></TrayItem>
          <TrayItem $w={10} />
          <TwoLines $align="right" $up={4}><span>20:54</span><small>15-10-2023</small></TwoLines>
          <NoticeCount>8</NoticeCount>
        </Tray>
      </Taskbar>
    </Screen>
  );
}
